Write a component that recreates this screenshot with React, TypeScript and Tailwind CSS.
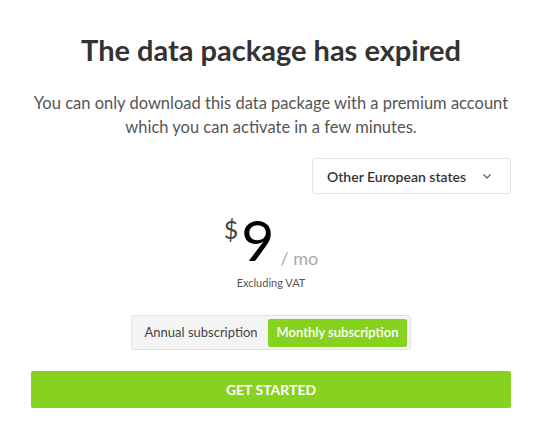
import type { JSX } from "react";

const font = { fontFamily: '"Source Sans Pro", "Lato", "Liberation Sans", sans-serif' };

export default function App(): JSX.Element {
  return (
    <main className="w-[537px] h-[436px] bg-white" style={font}>
      <div className="ml-[31px] w-[480px] flex flex-col items-center pt-[30px]">
        <h1 className="text-[29px] leading-[40px] font-bold text-[#333]">The data package has expired</h1>
        <p className="mt-[21px] text-[16.5px] leading-[24px] text-[#555] text-center whitespace-nowrap">
          You can only download this data package with a premium account
          <br />
          which you can activate in a few minutes.
        </p>
        <div className="self-end mt-[19px] w-[199px] h-[36px] border border-[#e3e3e3] rounded-[3px] flex items-center justify-between pl-[14px] pr-[18px]">
          <span className="text-[14px] font-semibold text-[#333]">Other European states</span>
          <svg className="w-[10px] h-[10px]" viewBox="0 0 10 10" fill="none" stroke="#555" strokeWidth="1.2">
            <path d="M1.5 3.5 5 7 8.5 3.5" />
          </svg>
        </div>
        <div className="mt-[16px] flex items-end">
          <span className="self-start mt-[4px] text-[25px] leading-[30px] text-[#444]">$</span>
          <span className="text-[57px] leading-[58px] text-black ml-[3px]">9</span>
          <span className="ml-[6px] text-[18px] leading-[20px] text-[#aaa]">/ mo</span>
        </div>
        <span className="mt-[8px] text-[11px] leading-[14px] text-[#555]">Excluding VAT</span>
        <div className="mt-[25px] flex items-center h-[35px] px-[3px] border border-[#e3e3e3] bg-[#f4f4f4] rounded-[3px]">
          <span className="px-[10px] text-[13px] text-[#444]">Annual subscription</span>
          <span className="h-[28px] flex items-center px-[9px] bg-[#86d21f] rounded-[2px] text-[13px] font-semibold text-white">
            Monthly subscription
          </span>
        </div>
        <button className="mt-[21px] w-full h-[37px] bg-[#86d21f] text-white text-[14px] font-bold rounded-[2px]">
          GET STARTED
        </button>
      </div>
    </main>
  );
}
